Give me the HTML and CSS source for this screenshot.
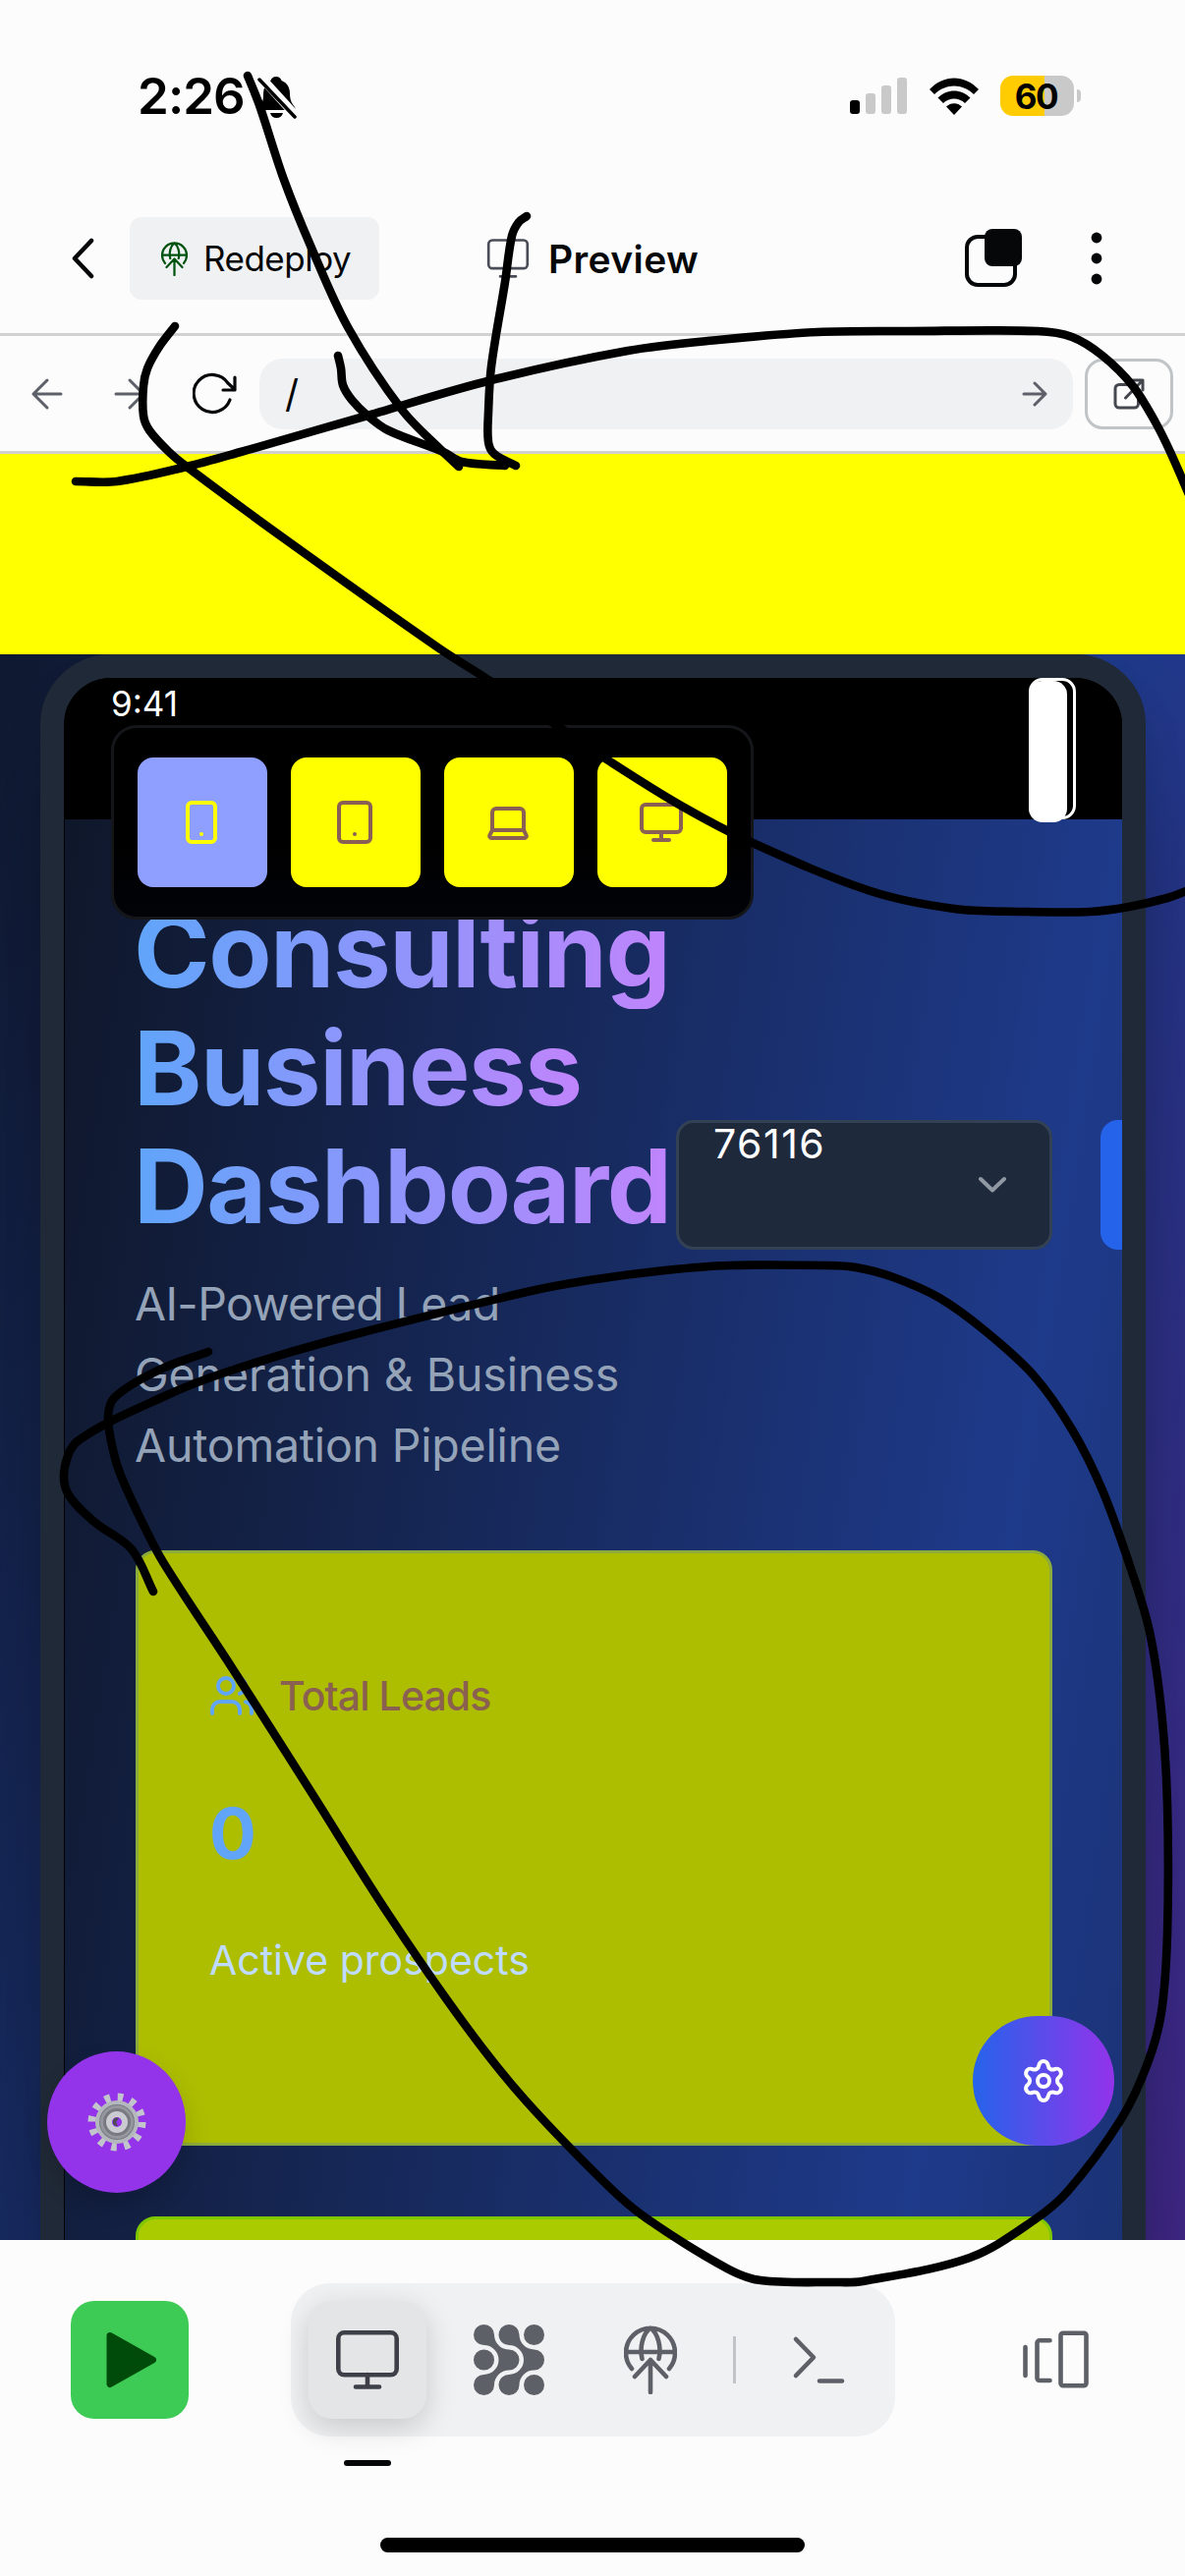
FILE: index.html
```html
<!DOCTYPE html>
<html lang="en">
<head>
<meta charset="utf-8">
<title>Preview</title>
<link rel="stylesheet" href="styles.css">
</head>
<body>
<svg class="defs" width="0" height="0" aria-hidden="true">
  <defs>
    <symbol id="deploy" viewBox="0 0 54 70">
      <path d="M8 44A25 25 0 1 1 46 44M2.5 27H51.500M18.500 34C15.500 22 19.500 8 27 2.500C34.500 8 38.500 22 35.500 34M27 35V68M11 52L27 35L43 52"/>
    </symbol>
    <symbol id="monitor" viewBox="0 0 64 60">
      <rect x="2.300" y="2.300" width="59.400" height="43" rx="6"/>
      <path d="M32 45V57M20 57.500H44"/>
    </symbol>
  </defs>
</svg>
<div class="phone">
  <header class="status">
    <div class="clock">2:26</div>
    <svg class="bell" width="40" height="44" viewBox="0 0 40 44">
      <path d="M19 1C22 1 24 3 24.500 5C30 7 33 12 33 18C33 25 35 28 38 32L39 35H1C2 30 6 29 6 20C6 12 9 7 13.500 5C14 3 16 1 19 1ZM13 38H26C25 41.500 23 43 19.500 43C16 43 14 41.500 13 38Z"/>
      <path class="cut" d="M1 -1L42 44"/>
      <path class="slash" d="M2 4L38 42"/>
    </svg>
    <div class="status-right">
      <div class="signal"><i class="on"></i><i></i><i></i><i></i></div>
      <svg class="wifi" width="52" height="38" viewBox="0 0 52 38">
        <path d="M1 12C15 -3.500 37 -3.500 51 12L46 17C34.500 5.500 17.500 5.500 6 17ZM9.500 20.500C19 11 33 11 42.500 20.500L37 26C31 20 21 20 15 26ZM18 29.500C22.500 25 29.500 25 34 29.500L26 38Z"/>
      </svg>
      <div class="battery"><span>60</span></div>
      <div class="nub"></div>
    </div>
  </header>

  <nav class="topbar">
    <svg class="back" width="26" height="44" viewBox="0 0 26 44"><path d="M22 4L5 22L22 40"/></svg>
    <button class="redeploy"><svg width="27" height="35"><use href="#deploy"/></svg><span>Redeploy</span></button>
    <div class="tab"><svg width="44" height="40"><use href="#monitor"/></svg><span>Preview</span></div>
    <svg class="copies" width="60" height="60" viewBox="0 0 60 60">
      <rect class="o" x="3" y="8" width="49" height="49" rx="11"/>
      <rect class="f" x="21" y="0" width="38" height="38" rx="8"/>
    </svg>
    <svg class="dots" width="12" height="54" viewBox="0 0 12 54"><circle cx="6" cy="6" r="5.400"/><circle cx="6" cy="27" r="5.400"/><circle cx="6" cy="48" r="5.400"/></svg>
  </nav>

  <div class="urlbar">
    <svg class="ar a1" width="34" height="34" viewBox="0 0 34 34"><path d="M31 17H3M17 3L3 17L17 31"/></svg>
    <svg class="ar a2" width="34" height="34" viewBox="0 0 34 34"><path d="M3 17H31M17 3L31 17L17 31"/></svg>
    <svg class="reload" width="46" height="44" viewBox="0 0 46 44"><path d="M38 28A19 19 0 1 1 36 11L43 17.500M43 5V18H31"/></svg>
    <div class="url"><span>/</span><svg class="ar" width="26" height="26" viewBox="0 0 26 26"><path d="M2 13H24M13 2L24 13L13 24"/></svg></div>
    <button class="open"><svg width="32" height="32" viewBox="0 0 32 32"><path d="M16 6.500H6A4 4 0 0 0 2 10.500V26A4 4 0 0 0 6 30H21.500A4 4 0 0 0 25.500 26V18M12.500 20L30 2M20 2H30V12"/></svg></button>
  </div>

  <main class="stage">
    <div class="banner"></div>
    <div class="device">
      <div class="screen">
        <div class="notch"><span>9:41</span><div class="cell"><i></i></div></div>
        <div class="page">
          <div class="hero">
            <div class="titles">
              <h1><span>Consulting</span><span>Business</span><span>Dashboard</span></h1>
              <p><span class="l1">AI-Powered Lead</span><br><span class="l2">Generation &amp; Business</span><br><span class="l3">Automation Pipeline</span></p>
            </div>
            <div class="select"><span>76116</span><svg width="32" height="20" viewBox="0 0 32 20"><path d="M4 4L16 15.500L28 4"/></svg></div>
            <button class="go"></button>
          </div>
          <section class="card">
            <div class="card-head">
              <svg width="48" height="48" viewBox="0 0 24 24"><path d="M16 21v-2a4 4 0 0 0-4-4H6a4 4 0 0 0-4 4v2M16 3.130a4 4 0 0 1 0 7.750M22 21v-2a4 4 0 0 0-3-3.870"/><circle cx="9" cy="7" r="4"/></svg>
              <span>Total Leads</span>
            </div>
            <div class="count">0</div>
            <div class="note">Active prospects</div>
          </section>
          <section class="card second"></section>
        </div>
      </div>
    </div>
    <div class="sizes">
      <button class="sel"><svg width="48" height="48" viewBox="0 0 24 24"><rect x="5" y="2" width="14" height="20" rx="2"/><path d="M12 18h.01"/></svg></button>
      <button><svg width="48" height="48" viewBox="0 0 24 24"><rect x="4" y="2" width="16" height="20" rx="2"/><path d="M12 18h.01"/></svg></button>
      <button><svg width="48" height="48" viewBox="0 0 24 24"><path d="M20 16V7a2 2 0 0 0-2-2H6a2 2 0 0 0-2 2v9M4 16H20L21.280 18.550A1 1 0 0 1 20.380 20H3.620A1 1 0 0 1 2.720 18.550Z"/></svg></button>
      <button><svg width="48" height="48" viewBox="0 0 24 24"><rect x="2" y="3" width="20" height="14" rx="2"/><path d="M8 21h8M12 17v4"/></svg></button>
    </div>
    <button class="fab left">
      <svg width="60" height="60" viewBox="0 0 60 60">
        <circle cx="30" cy="30" r="25" fill="none" stroke="#c3c5cc" stroke-width="9" stroke-dasharray="5.500 7.590" stroke-linecap="butt"/>
        <circle cx="30" cy="30" r="20" fill="#777a80" stroke="#b4b7be" stroke-width="4"/>
        <circle cx="30" cy="30" r="15.500" fill="none" stroke="#94979d" stroke-width="3"/>
        <circle cx="30" cy="30" r="8" fill="#9333ea" stroke="#c9cbd0" stroke-width="6"/>
        <path d="M26 28A5 5 0 0 1 32 26L29 30L31 34A5 5 0 0 1 26 32Z" fill="#4c4c52"/>
      </svg>
    </button>
    <button class="fab right">
      <svg width="48" height="48" viewBox="0 0 24 24"><path d="M9.671 4.136a2.340 2.340 0 0 1 4.659 0 2.340 2.340 0 0 0 3.319 1.915 2.340 2.340 0 0 1 2.330 4.033 2.340 2.340 0 0 0 0 3.831 2.340 2.340 0 0 1-2.330 4.033 2.340 2.340 0 0 0-3.319 1.915 2.340 2.340 0 0 1-4.659 0 2.340 2.340 0 0 0-3.320-1.915 2.340 2.340 0 0 1-2.330-4.033 2.340 2.340 0 0 0 0-3.831A2.340 2.340 0 0 1 6.350 6.051a2.340 2.340 0 0 0 3.319-1.915"/><circle cx="12" cy="12" r="3"/></svg>
    </button>
  </main>

  <footer class="dock">
    <div class="dock-row">
      <button class="run"><svg width="52" height="58" viewBox="0 0 52 58"><path d="M4 4.500L47.500 29L4 53.500Z"/></svg></button>
      <div class="tools">
        <button class="active"><svg width="64" height="60"><use href="#monitor"/></svg></button>
        <button class="blobs"><svg width="72" height="72" viewBox="0 0 72 72">
          <path id="blob" d="M10.500 0A10.500 10.500 0 0 1 21 10.500A15 15 0 0 0 36 25.500A10.500 10.500 0 0 1 36 46.500A15 15 0 0 0 21 61.500A10.500 10.500 0 1 1 10.500 51A15 15 0 0 0 10.500 21A10.500 10.500 0 0 1 10.500 0Z"/>
          <use href="#blob" x="25.500"/>
          <circle cx="10.500" cy="36" r="10.500"/><circle cx="61.500" cy="10.500" r="10.500"/><circle cx="61.500" cy="61.500" r="10.500"/>
        </svg></button>
        <button><svg width="54" height="70"><use href="#deploy"/></svg></button>
        <i class="sep"></i>
        <button class="term"><svg width="54" height="50" viewBox="0 0 54 50"><path d="M4 4L22 22.500L4 41M28 46.500H51"/></svg></button>
      </div>
      <svg class="panes" width="68" height="60" viewBox="0 0 68 60"><path d="M3.500 17V46M28.500 10.300H18A2.500 2.500 0 0 0 15.500 12.800V48.500A2.500 2.500 0 0 0 18 51H28.500"/><rect x="39.500" y="2.700" width="26" height="53.600" rx="2.500"/></svg>
    </div>
    <div class="tick"></div>
    <div class="home"></div>
  </footer>

  <svg class="ink" width="1206" height="2622" viewBox="0 0 1206 2622">
    <path data-p="252,77 264,107 289,183 316,250 354,333 409,417 451,460 467,475"/>
    <path data-p="344,362 347,375 349,392 358,407 374,423 395,438 451,460 470,470 514,474"/>
    <path data-p="536,220 528,226 521,240 514,287 500,373 497,420 497,450 503,462 525,474"/>
    <path data-p="77,490 119,490 190,475 245,460 374,423 500,387 639,357 731,346 832,338 925,337 1056,337 1091,343 1122,362 1153,393 1176,430 1191,460 1212,508"/>
    <path data-p="178,332 162,353 150,375 146,393 146,423 152,438 172,460 190,475 289,548 447,660 494,690 569,740 619,774 693,820 766,858 886,907 971,925 1041,928 1110,928 1149,923 1188,914 1210,906"/>
    <path data-p="212,1376 165,1393 117,1422 110,1443 116,1480 123,1502 145,1550 166,1590 237,1699 316,1823 395,1948 474,2062 534,2137 620,2226 658,2258 740,2309 774,2321 851,2323 878,2322 987,2298 1052,2260 1087,2230 1141,2157 1168,2100 1182,2048 1188,1968 1188,1836 1182,1742 1170,1661 1151,1597 1122,1517 1091,1455 1052,1400 1003,1355 956,1321 909,1300 871,1290 840,1288 743,1288 677,1293 600,1303 536,1315 339,1364 232,1396 170,1420 80,1466 66,1493 69,1520 96,1549 134,1577 156,1620"/>
  </svg>
</div>
<script src="ink.js"></script>
</body>
</html>
```
FILE: styles.css
```css
* { box-sizing: border-box; }
body { margin: 0; font-family: Inter, "Liberation Sans", sans-serif; color: #060709; }
button { border: 0; padding: 0; margin: 0; font: inherit; color: inherit; display: flex; align-items: center; justify-content: center; flex: none; }
svg { display: block; flex: none; fill: none; stroke-linecap: round; stroke-linejoin: round; }
.defs { position: absolute; }
.phone { position: relative; width: 1206px; height: 2622px; overflow: hidden; background: #fcfcfc; display: flex; flex-direction: column; }

.status { height: 187px; padding: 77px 106px 0 140px; display: flex; align-items: flex-start; flex: none; }
.clock { width: 108px; font-size: 51px; line-height: 42px; font-weight: 600; letter-spacing: -0.9px; color: #000; white-space: nowrap; }
.bell { margin-left: 14px; fill: #000; }
.bell .cut { stroke: #fcfcfc; stroke-width: 9; }
.bell .slash { stroke: #000; stroke-width: 3.500px; }
.status-right { margin-left: auto; display: flex; align-items: center; height: 41px; }
.signal { display: flex; gap: 6px; align-items: flex-end; height: 37px; }
.signal i { width: 10px; border-radius: 3px; background: #c9c9c9; height: 21px; }
.signal i.on { background: #000; height: 14px; }
.signal i:nth-child(3) { height: 29px; }
.signal i:nth-child(4) { height: 37px; }
.wifi { fill: #000; margin-left: 22px; }
.battery { margin-left: 21px; width: 75px; height: 41px; border-radius: 13px; background: linear-gradient(90deg, #ffcc02 60%, #c9c9c9 60%); display: flex; align-items: center; justify-content: center; font-size: 35px; font-weight: 700; letter-spacing: -1.5px; padding-right: 2px; color: #000; }
.nub { margin-left: 3px; width: 4px; height: 13px; border-radius: 0 6px 6px 0; background: #c9c9c9; }

.topbar { height: 155px; padding: 0 84px 0 71px; border-bottom: 3px solid #d2d2d2; display: flex; align-items: center; flex: none; }
.back { stroke: #060709; stroke-width: 4.500px; }
.redeploy { width: 254px; height: 84px; margin-left: 35px; border-radius: 12px; background: #f0f1f3; gap: 16px; font-size: 35px; letter-spacing: -0.5px; justify-content: flex-start; padding-left: 32px; }
.redeploy svg { stroke: #00530f; stroke-width: 4.500px; }
.tab { margin-left: 109px; display: flex; align-items: center; gap: 19px; font-size: 39px; font-weight: 600; letter-spacing: 0.4px; }
.tab svg { stroke: #4a4d57; stroke-width: 4px; }
.copies { margin-left: auto; }
.copies .o { stroke: #060709; stroke-width: 4px; }
.copies .f { fill: #060709; }
.dots { margin-left: 69px; fill: #060709; }

.urlbar { height: 120px; padding: 0 12px 0 31px; border-bottom: 3px solid #d0d0d0; display: flex; align-items: center; flex: none; }
.ar { stroke: #5d6068; stroke-width: 3px; }
.a2 { margin-left: 50px; }
.reload { margin-left: 47px; stroke: #060709; stroke-width: 3.200px; }
.url { flex: 1; margin-left: 22px; height: 72px; border-radius: 24px; background: #f0f1f3; display: flex; align-items: center; justify-content: space-between; padding: 0 26px 0 26px; font-size: 39px; }
.open { width: 90px; height: 72px; margin-left: 12px; border: 3px solid #c0c4c6; border-radius: 18px; background: none; }
.open svg { stroke: #45484f; stroke-width: 3px; }

.stage { position: relative; height: 1818px; overflow: hidden; flex: none; background: linear-gradient(to bottom right, #0f172a, #1e3a8a, #581c87) 0 0 / 100% 3000px no-repeat; }
.banner { height: 204px; background: #ff0; position: relative; z-index: 1; }
.device { width: 1125px; height: 2200px; margin-left: 41px; border: 24px solid #202937; border-radius: 72px; background: #000; box-shadow: 0 75px 150px -36px rgba(0, 0, 0, .4), 0 30px 40px rgba(0,0,0,.1); }
.screen { border-radius: 48px 48px 0 0; overflow: hidden; padding-left: 1px; height: 2150px; }
.notch { height: 144px; background: #000; color: #fff; display: flex; justify-content: space-between; padding: 0 47px; font-size: 35px; line-height: 52px; }
.cell { width: 48px; height: 144px; border: 3px solid #fff; border-radius: 14px; }
.cell i { display: block; width: 39px; height: 144px; margin-left: -3px; border-radius: 14px; background: #fff; }
.page { height: 2000px; padding: 73px 71px 0 72px; background: linear-gradient(to bottom right, #0f172a, #1e3a8a, #0f172a) 0 0 / 100% 7000px no-repeat; }
.hero { display: flex; align-items: center; width: 1100px; margin-bottom: 71px; }
.titles { width: 550px; flex: none; }
h1 { margin: 0 0 24px -2px; font-size: 105px; line-height: 120px; font-weight: 700; display: flex; flex-direction: column; align-items: flex-start; white-space: nowrap; letter-spacing: -1.5px; }
h1 span { color: transparent; background: linear-gradient(90deg, #60a5fa, #c084fc); background-clip: text; -webkit-background-clip: text; }
.titles p { margin: 0 0 0 -1px; font-size: 46.500px; line-height: 72px; color: #94a3b8; white-space: nowrap; }
.l1 { letter-spacing: -0.6px; }
.l2 { letter-spacing: -0.1px; }
.l3 { letter-spacing: -0.2px; }
.select { flex: none; width: 383px; height: 132px; margin-top: -2px; border: 3px solid #334155; border-radius: 18px; background: #1e293b; color: #fff; font-size: 41px; line-height: 43px; display: flex; justify-content: space-between; padding: 0 42px 0 35px; }
.select span { letter-spacing: 1.5px; }
.select svg { margin-top: 53px; stroke: #9098a4; stroke-width: 4px; }
.go { width: 132px; height: 132px; margin: -2px 0 0 49px; border-radius: 18px; background: #2563eb; }
.card { height: 606px; border: 3px solid #8bab3c; border-radius: 20px; background: #adbd00; padding: 115px 72px; }
.card-head { display: flex; align-items: center; gap: 24px; height: 59px; font-size: 41px; font-weight: 500; letter-spacing: -0.9px; color: #8a6050; }
.card-head svg { stroke: #60a5fa; stroke-width: 2px; margin-left: -1px; }
.count { margin-top: 57px; font-size: 71px; line-height: 108px; font-weight: 700; color: #60a5fa; }
.note { margin-top: 45px; font-size: 41px; line-height: 60px; color: #bfdbfe; }
.second { margin-top: 72px; border-color: #7fc800; background: #a9cb00; }

.sizes { position: absolute; left: 113px; top: 276px; width: 654px; height: 198px; border: 3px solid #14161a; border-radius: 26px; background: linear-gradient(#000 60%, #020308); display: flex; align-items: center; gap: 24px; padding-left: 24px; z-index: 2; }
.sizes button { width: 132px; height: 132px; border-radius: 16px; background: #ff0; padding-right: 2px; }
.sizes svg { stroke: #8a6055; stroke-width: 2; }
.sizes .sel { background: #8f9fff; }
.sizes .sel svg { stroke: #ff0; }
.fab { position: absolute; z-index: 2; }
.fab.left { left: 48px; top: 1626px; width: 141px; height: 144px; border-radius: 50%; background: #9333ea; box-shadow: 0 12px 24px rgba(0, 0, 0, .15); }
.fab.right { left: 990px; top: 1590px; width: 144px; height: 132px; border-radius: 66px; background: linear-gradient(90deg, #2563eb, #9333ea); }
.fab.right svg { stroke: #fff; stroke-width: 2; }

.dock { height: 342px; background: #fcfcfc; position: relative; padding-top: 44px; flex: none; }
.dock-row { display: flex; align-items: center; padding: 0 98px 0 72px; }
.run { width: 120px; height: 120px; border-radius: 24px; background: #3dcb55; padding-left: 4px; }
.run svg { fill: #004a0a; stroke: #004a0a; stroke-width: 7px; }
.tools { margin-left: 104px; width: 615px; height: 156px; border-radius: 40px; background: #f0f1f3; display: flex; align-items: center; padding-left: 18px; }
.tools button { width: 120px; height: 120px; margin-right: 24px; border-radius: 24px; background: none; }
.tools svg { stroke: #5e6068; stroke-width: 4.600px; }
.tools .active { background: #e4e5e6; box-shadow: 0 9px 30px rgba(0, 0, 0, .17); }
.tools .active svg { stroke: #3e4049; }
.tools .blobs svg { fill: #5e6068; stroke: none; }
.tools .sep { width: 3px; height: 48px; background: #c1c3c6; }
.tools .term { margin: 0 0 0 24px; }
.panes { margin-left: auto; stroke: #5e6068; stroke-width: 4.600px; }
.tick { width: 48px; height: 6px; border-radius: 3px; background: #060709; margin: 24px 0 0 350px; }
.home { width: 432px; height: 15px; border-radius: 8px; background: #000; margin: 73px auto 0; }
.ink { position: absolute; left: 0; top: 0; z-index: 5; pointer-events: none; stroke: #000; stroke-width: 8.600px; }
```
FILE: ink.js
```js
// Draws each freehand stroke as a smooth curve through its sampled points.
document.querySelectorAll('.ink path').forEach(function (path) {
  var p = path.dataset.p.split(' ').map(function (s) { return s.split(',').map(Number); });
  var d = 'M' + p[0];
  for (var i = 0; i < p.length - 1; i++) {
    var a = p[i - 1] || p[i], b = p[i], c = p[i + 1], e = p[i + 2] || c;
    var len = Math.hypot(c[0] - b[0], c[1] - b[1]);
    var k1 = len / (Math.hypot(c[0] - a[0], c[1] - a[1]) || 1) / 3;
    var k2 = len / (Math.hypot(e[0] - b[0], e[1] - b[1]) || 1) / 3;
    d += 'C' + [b[0] + (c[0] - a[0]) * k1, b[1] + (c[1] - a[1]) * k1,
      c[0] - (e[0] - b[0]) * k2, c[1] - (e[1] - b[1]) * k2, c[0], c[1]];
  }
  path.setAttribute('d', d);
});
```
